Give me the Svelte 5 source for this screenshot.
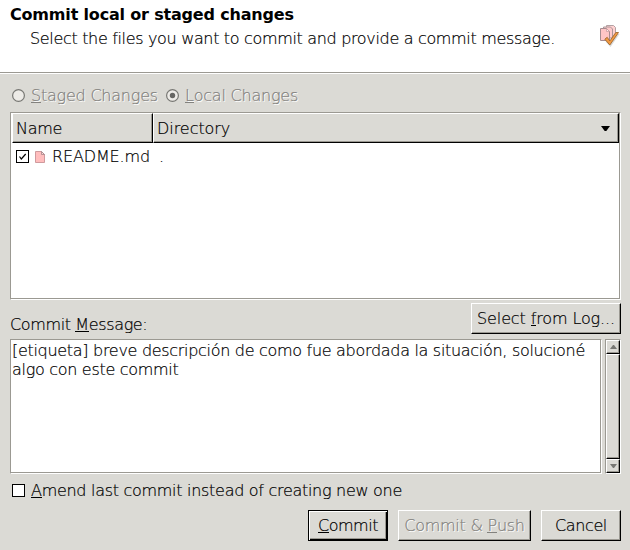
<script>
  const lines = ['[etiqueta] breve descripción de como fue abordada la situación, solucioné', 'algo con este commit'];
</script>

<div class="dialog">
  <header>
    <div class="intro">
      <h1><span class="t-title">Commit local or staged changes</span></h1>
      <p><span class="t-sub">Select the files you want to commit and provide a commit message.</span></p>
    </div>
    <svg class="banner" width="22" height="24" viewBox="0 0 22 24">
      <path d="M6.500 .5h7l2 2v9h-9z" fill="#ffd1d1" stroke="#b3a1a3" />
      <path d="M3.500 2h7l2 2v9h-9z" fill="#ffc9c9" stroke="#aa9799" />
      <path d="M.5 3.500h6l3 3v9H.5z" fill="#ffc5c5" stroke="#a58c90" />
      <path d="M6.500 6.500v-3l3 3z" fill="#ffecec" stroke="#bc8e92" stroke-width=".6" />
      <path d="M5.500 16.700l2.200-2.200 2.700 3.500L17 9h2.500L10.500 22z" fill="#aaa" opacity=".45" />
      <path d="M4.800 14.200l2.400-1.900 2.600 3.700L15.800 7.500h2.700L9.800 20z" fill="#f39a42" stroke="#a0692f" stroke-width=".9" />
    </svg>
  </header>

  <div class="radios">
    <svg width="13" height="13" viewBox="0 0 13 13"><circle cx="6.500" cy="6.500" r="5.900" fill="#edebe7" stroke="#777773" stroke-width="1.200" /></svg>
    <span class="off t-staged"><u>S</u>taged Changes</span>
    <svg width="13" height="13" viewBox="0 0 13 13"><circle cx="6.500" cy="6.500" r="5.900" fill="#edebe7" stroke="#777773" stroke-width="1.200" /><circle cx="6.500" cy="6.500" r="2.700" fill="#666663" /></svg>
    <span class="off t-local"><u>L</u>ocal Changes</span>
  </div>

  <div class="table">
    <div class="thead">
      <div class="th first"><span class="t-name">Name</span></div>
      <div class="th"><span class="t-dir">Directory</span><svg width="9" height="5" viewBox="0 0 9 5"><path d="M0 0h9L5.300 5H3.700z" fill="#000" /></svg></div>
    </div>
    <div class="row">
      <span class="box"><svg width="11" height="11" viewBox="0 0 11 11"><path d="M2.500 5.500l1.800 2.500L8.700 3" fill="none" stroke="#000" stroke-width="1.200" /></svg></span>
      <svg class="file" width="10" height="12" viewBox="0 0 10 12"><path d="M.5.500h6l3 3v8H.5z" fill="#ffbdbd" stroke="#cf9a9d" /><path d="M6.500 .5v3h3z" fill="#ffdada" stroke="#a58488" stroke-width=".8" /></svg>
      <span class="fname"><span class="t-readme">README.md</span></span>
      <span>.</span>
    </div>
  </div>

  <div class="msgbar">
    <span class="t-msg">Commit <u>M</u>essage:</span>
    <button class="select"><span class="t-select">Select <u>f</u>rom Log...</span></button>
  </div>

  <div class="editor">
    <div class="area">
      {#each lines as line, i}<div class="line"><span class={i ? 't-l2' : 't-l1'}>{line}</span></div>{/each}
    </div>
    <div class="scroll">
      <div class="arrow"><svg width="7" height="4" viewBox="0 0 7 4"><path d="M0 4L3 0h1l3 4z" fill="#777773" /></svg></div>
      <div class="thumb"></div>
      <div class="arrow"><svg width="7" height="4" viewBox="0 0 7 4"><path d="M0 0h7L4 4H3z" fill="#777773" /></svg></div>
    </div>
  </div>

  <div class="amend"><span class="box"></span><span class="t-amend"><u>A</u>mend last commit instead of creating new one</span></div>

  <footer>
    <button class="default"><span class="t-commit"><u>C</u>ommit</span></button>
    <button class="push" disabled><span class="off t-push">Commit &amp; <u>P</u>ush</span></button>
    <button class="cancel"><span class="t-cancel">Cancel</span></button>
  </footer>
</div>

<style>
  :global(body) { margin: 0; background: #dbdad5; }
  .dialog { width: 630px; height: 550px; overflow: hidden; background: #dbdad5; color: #000; font: 200 16px/19px 'DejaVu Sans Light', 'DejaVu Sans', sans-serif; white-space: nowrap; -webkit-text-stroke: .2px currentColor; }
  .dialog * { box-sizing: border-box; }
  svg { display: block; flex: none; }
  u { text-decoration: none; border-bottom: 1px solid currentColor; display: inline-block; height: 17px; line-height: 19px; }
  header { display: flex; justify-content: space-between; height: 74px; padding: 5px 8px 0 10px; background: #fff; border-bottom: 1px solid #fff; box-shadow: inset 0 -1px #9b9992; }
  h1 { margin: 0; font: bold 16px/19px 'DejaVu Sans', sans-serif; -webkit-text-stroke: 0; }
  p { margin: 5px 0 0 20px; }
  .banner { margin: 20px 0 0 0; }
  .radios { display: flex; align-items: center; height: 19px; margin: 12px 0 0 12px; }
  .radios span { width: 135px; margin-left: 6px; }
  .off { color: #83827e; text-shadow: 1px 1px #fff; }
  .table { width: 611px; height: 188px; margin: 7px 0 0 10px; background: #fff; border: 1px solid #9b9992; border-right-color: #fff; border-bottom-color: #fff; box-shadow: inset -1px -1px #9b9992; padding: 0 1px 1px 1px; }
  .thead { display: flex; height: 30px; }
  .th { flex: 1; display: flex; align-items: center; justify-content: space-between; padding: 1px 8px 0 3px; background: #dbdad5; border: 1px solid #fff; border-right-color: #000; border-bottom-color: #000; box-shadow: inset -1px -1px #9b9992; }
  .th.first { flex: 0 0 141px; }
  .row { display: flex; align-items: center; height: 27px; padding-left: 4px; }
  .box { width: 13px; height: 13px; background: #fff; border: 1px solid #000; flex: none; }
  .file { margin-left: 6px; }
  .fname { width: 107px; margin-left: 7px; }
  .msgbar { display: flex; justify-content: space-between; align-items: flex-start; height: 36px; margin: 3px 9px 0 10px; }
  .msgbar > span { margin-top: 12px; }
  button { font: inherit; color: inherit; padding: 0; height: 31px; display: flex; align-items: center; justify-content: center; background: #dbdad5; border: 1px solid #fff; border-right-color: #000; border-bottom-color: #000; border-radius: 0; box-shadow: inset -1px -1px #9b9992; }
  .select { width: 150px; }
  .editor { display: flex; justify-content: space-between; margin: 0 9px 0 10px; height: 135px; }
  .area { width: 592px; background: #fff; padding: 1px; border: 1px solid #9b9992; border-right-color: #fff; border-bottom-color: #fff; box-shadow: inset -1px -1px #9b9992; }
  .scroll { width: 16px; height: 135px; display: flex; flex-direction: column; border: 1px solid #9b9992; border-right-color: #fff; border-bottom-color: #fff; background: #dbdad5; }
  .arrow, .thumb { border: 1px solid #fff; border-right-color: #000; border-bottom-color: #000; box-shadow: inset -1px -1px #9b9992; }
  .arrow { height: 14px; display: flex; align-items: center; justify-content: center; }
  .thumb { flex: 1; }
  .amend { display: flex; align-items: center; height: 19px; margin: 7px 0 0 12px; }
  .amend .box { margin-right: 6px; }
  footer { display: flex; justify-content: flex-end; gap: 10px; margin: 10px 9px 0 0; }
  .default { width: 80px; border-color: #000; box-shadow: inset 1px 1px #fff, inset -1px -1px #000, inset -2px -2px #9b9992; }
  .push { width: 133px; }
  .cancel { width: 80px; }
  .t-title { letter-spacing: -.18px; }
  .t-sub { letter-spacing: -.33px; }
  .t-staged, .t-local { letter-spacing: -.22px; }
  .t-name { letter-spacing: -.25px; }
  .t-dir { letter-spacing: -.05px; }
  .t-readme { letter-spacing: -.15px; }
  .t-msg { letter-spacing: -.37px; }
  .t-select { letter-spacing: -.12px; }
  .t-l1, .t-l2 { letter-spacing: -.3px; }
  .t-amend { letter-spacing: -.29px; }
  .t-commit { letter-spacing: -.45px; }
  .t-push { letter-spacing: -.25px; }
  .t-cancel { letter-spacing: -.4px; }
</style>
